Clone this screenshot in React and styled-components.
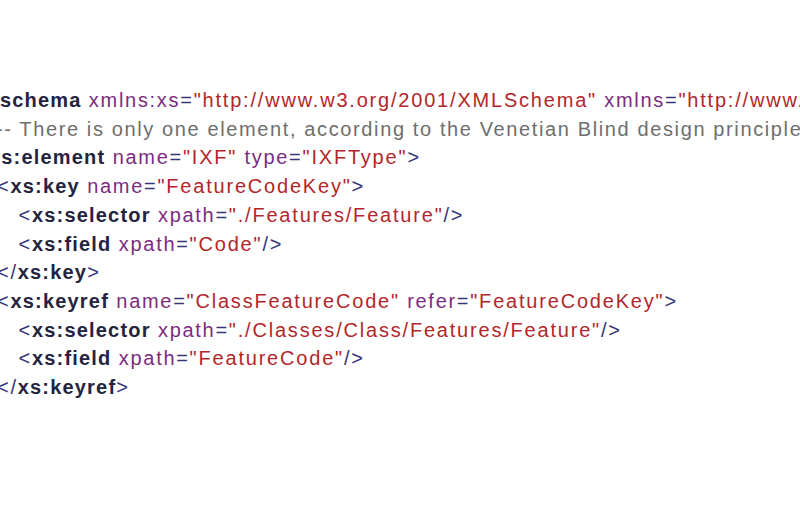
import styled, { createGlobalStyle } from "styled-components";

const GlobalStyle = createGlobalStyle`
  html, body {
    margin: 0;
    padding: 0;
    background: #fff;
    overflow: hidden;
  }
`;

const Page = styled.div`
  width: 800px;
  height: 505px;
  overflow: hidden;
  background: #fff;
  padding-top: 86px;
  box-sizing: border-box;
`;

const Code = styled.div`
  margin-left: -46px;
  font-family: "Liberation Sans", Arial, sans-serif;
  font-size: 20px;
  letter-spacing: 1.7px;
  line-height: 28.7px;
  white-space: nowrap;
`;

const Line = styled.div`
  padding-left: ${(p) => p.$level * 21.5}px;
`;

const Punct = styled.span`
  color: #35357a;
`;

const Tag = styled.span`
  color: #24243e;
  font-weight: bold;
  letter-spacing: 1.2px;
`;

const Attr = styled.span`
  color: #7b2c80;
`;

const Value = styled.span`
  color: #b3262a;
  letter-spacing: 1.8px;
`;

const Comment = styled.span`
  color: #6e6e6e;
  letter-spacing: 1.62px;
`;

const Element = ({ name, attrs = [], close, selfClose }) => (
  <>
    <Punct>{close ? "</" : "<"}</Punct>
    <Tag>{name}</Tag>
    {attrs.map(([k, v]) => (
      <span key={k}>
        {" "}
        <Attr>{k}</Attr>
        <Punct>=</Punct>
        <Value>"{v}"</Value>
      </span>
    ))}
    <Punct>{selfClose ? "/>" : ">"}</Punct>
  </>
);

const lines = [
  {
    level: 0,
    name: "xs:schema",
    attrs: [
      ["xmlns:xs", "http://www.w3.org/2001/XMLSchema"],
      ["xmlns", "http://www.example.com/IXF"],
    ],
  },
  {
    level: 1,
    comment:
      "<!-- There is only one element, according to the Venetian Blind design principle -->",
  },
  {
    level: 1,
    name: "xs:element",
    attrs: [
      ["name", "IXF"],
      ["type", "IXFType"],
    ],
  },
  { level: 2, name: "xs:key", attrs: [["name", "FeatureCodeKey"]] },
  {
    level: 3,
    name: "xs:selector",
    attrs: [["xpath", "./Features/Feature"]],
    selfClose: true,
  },
  { level: 3, name: "xs:field", attrs: [["xpath", "Code"]], selfClose: true },
  { level: 2, name: "xs:key", close: true },
  {
    level: 2,
    name: "xs:keyref",
    attrs: [
      ["name", "ClassFeatureCode"],
      ["refer", "FeatureCodeKey"],
    ],
  },
  {
    level: 3,
    name: "xs:selector",
    attrs: [["xpath", "./Classes/Class/Features/Feature"]],
    selfClose: true,
  },
  {
    level: 3,
    name: "xs:field",
    attrs: [["xpath", "FeatureCode"]],
    selfClose: true,
  },
  { level: 2, name: "xs:keyref", close: true },
];

const App = () => {
  return (
    <Page>
      <GlobalStyle />
      <Code>
        {lines.map((l, i) => (
          <Line key={i} $level={l.level}>
            {l.comment ? (
              <Comment>{l.comment}</Comment>
            ) : (
              <Element {...l} />
            )}
          </Line>
        ))}
      </Code>
    </Page>
  );
};

export default App;
